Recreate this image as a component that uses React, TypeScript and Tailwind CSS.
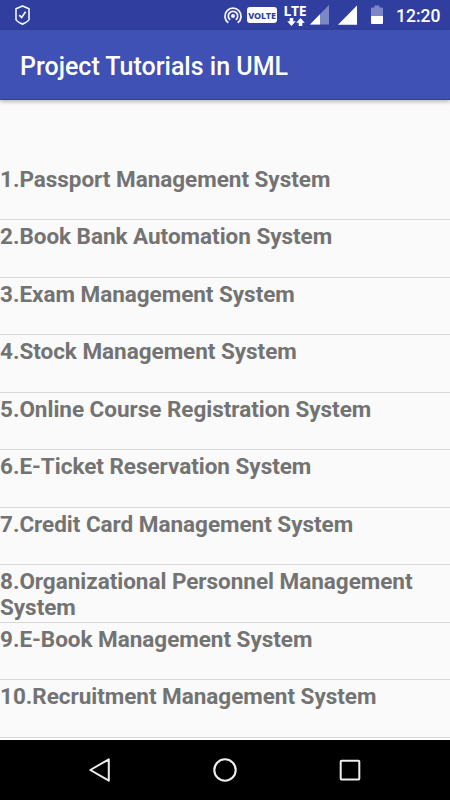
const tutorials = [
  'Passport Management System',
  'Book Bank Automation System',
  'Exam Management System',
  'Stock Management System',
  'Online Course Registration System',
  'E-Ticket Reservation System',
  'Credit Card Management System',
  'Organizational Personnel Management System',
  'E-Book Management System',
  'Recruitment Management System',
];

function StatusBar() {
  return (
    <div className="flex h-[30px] shrink-0 items-center bg-[#303f9f] text-white">
      <svg className="ml-[14px] h-[22px] w-[17px] shrink-0" viewBox="0 0 17 22" fill="none" stroke="#f5f6fb">
        <path d="M8.5 1.9 L15 4.8 V15.6 C14.6 17.2 11 18.8 8.5 20.3 C6 18.8 2.4 17.2 2 15.6 V4.8 Z" strokeWidth="1.6" strokeLinejoin="round" />
        <path d="M5.2 11.2 L7.6 13.4 L11.6 7.8" strokeWidth="1.7" />
      </svg>
      <svg className="ml-[192px] h-[20px] w-[20px] shrink-0" viewBox="0 0 20 20" fill="none" stroke="#f3f4fb" strokeWidth="1.8">
        <path d="M5.3 17.8 A8.1 8.1 0 1 1 14.7 17.8" />
        <path d="M7.2 14.8 A4.7 4.7 0 1 1 12.8 14.8" />
        <circle cx="10" cy="11" r="2" fill="#f3f4fb" stroke="none" />
      </svg>
      <div className="ml-[4px] flex h-[16px] w-[30px] shrink-0 items-center justify-center rounded-[3px] bg-white font-['Noto_Sans','Open_Sans',sans-serif] text-[9px] leading-none font-extrabold tracking-[-0.15px] text-[#303f9f]">
        VOLTE
      </div>
      <div className="mb-[1px] ml-[6px] flex h-[22px] w-[24px] shrink-0 flex-col items-center">
        <span className="font-['Noto_Sans',sans-serif] text-[14px] leading-[14px] font-bold tracking-[-0.2px]">LTE</span>
        <svg className="ml-[2px] h-[8px] w-[18px] shrink-0" viewBox="0 0 18 8" fill="white">
          <path d="M2.7 0h3.6v3.3h2.5L4.5 8 .2 3.3h2.5z" />
          <path d="M13.5 0l4.3 4.7h-2.5V8h-3.6V4.7H9.2z" />
        </svg>
      </div>
      <svg className="ml-[3px] h-[20px] w-[19px] shrink-0" viewBox="0 0 19 20">
        <path d="M19 0V19.5H0Z" fill="#7c87c6" />
        <path d="M10 9.2V19.5H0Z" fill="white" />
      </svg>
      <svg className="ml-[9px] h-[20px] w-[19px] shrink-0" viewBox="0 0 19 20">
        <path d="M19 0.5V19.8H0Z" fill="white" />
      </svg>
      <svg className="ml-[14px] h-[20px] w-[12px] shrink-0" viewBox="0 0 12 20">
        <path d="M0 3.5Q0 2.5 1 2.5H3.5V0.5H8.5V2.5H11Q12 2.5 12 3.5V11H0Z" fill="#7c87c6" />
        <path d="M0 11H12V18Q12 19 11 19H1Q0 19 0 18Z" fill="white" />
      </svg>
      <span className="mt-[2px] ml-[13px] text-[17.5px] leading-[20px] font-medium">12:20</span>
    </div>
  );
}

function NavigationBar() {
  return (
    <div className="flex h-[60px] shrink-0 items-center justify-center gap-[101px] bg-black">
      <svg className="h-6 w-6" viewBox="0 0 24 24" fill="none" stroke="#eee" strokeWidth="2" strokeLinejoin="round">
        <path d="M2.3 12L20.8 1.3V22.7Z" />
      </svg>
      <svg className="h-6 w-6" viewBox="0 0 24 24" fill="none" stroke="#eee" strokeWidth="2.1">
        <circle cx="12" cy="12" r="10.7" />
      </svg>
      <svg className="h-6 w-6" viewBox="0 0 24 24" fill="none" stroke="#eee" strokeWidth="2" strokeLinejoin="round">
        <rect x="2.7" y="2.8" width="18.6" height="18.6" rx="0.7" />
      </svg>
    </div>
  );
}

export default function App() {
  return (
    <div className="flex h-[800px] w-[450px] flex-col overflow-hidden bg-[#fafafa] font-['Roboto',sans-serif]">
      <StatusBar />
      <header className="z-10 flex h-[70px] shrink-0 items-center border-b border-[#303f9f] bg-[#3f51b5] pt-[5px] pl-5 shadow-[0_2px_4px_rgba(0,0,0,0.25)]">
        <h1 className="text-[25px] leading-[30px] font-medium whitespace-nowrap text-white">Project Tutorials in UML</h1>
      </header>
      <main className="min-h-0 flex-1 overflow-hidden border-b-2 border-white pt-[62.5px]">
        <ul>
          {tutorials.map((name, i) => (
            <li key={name} className="h-[57.5px] border-b border-[#d8d8d8] pt-[3px] text-[22.5px] leading-[26.4px] font-bold tracking-[-0.03px] text-[#737373]">
              {i + 1}.{name}
            </li>
          ))}
        </ul>
      </main>
      <NavigationBar />
    </div>
  );
}
